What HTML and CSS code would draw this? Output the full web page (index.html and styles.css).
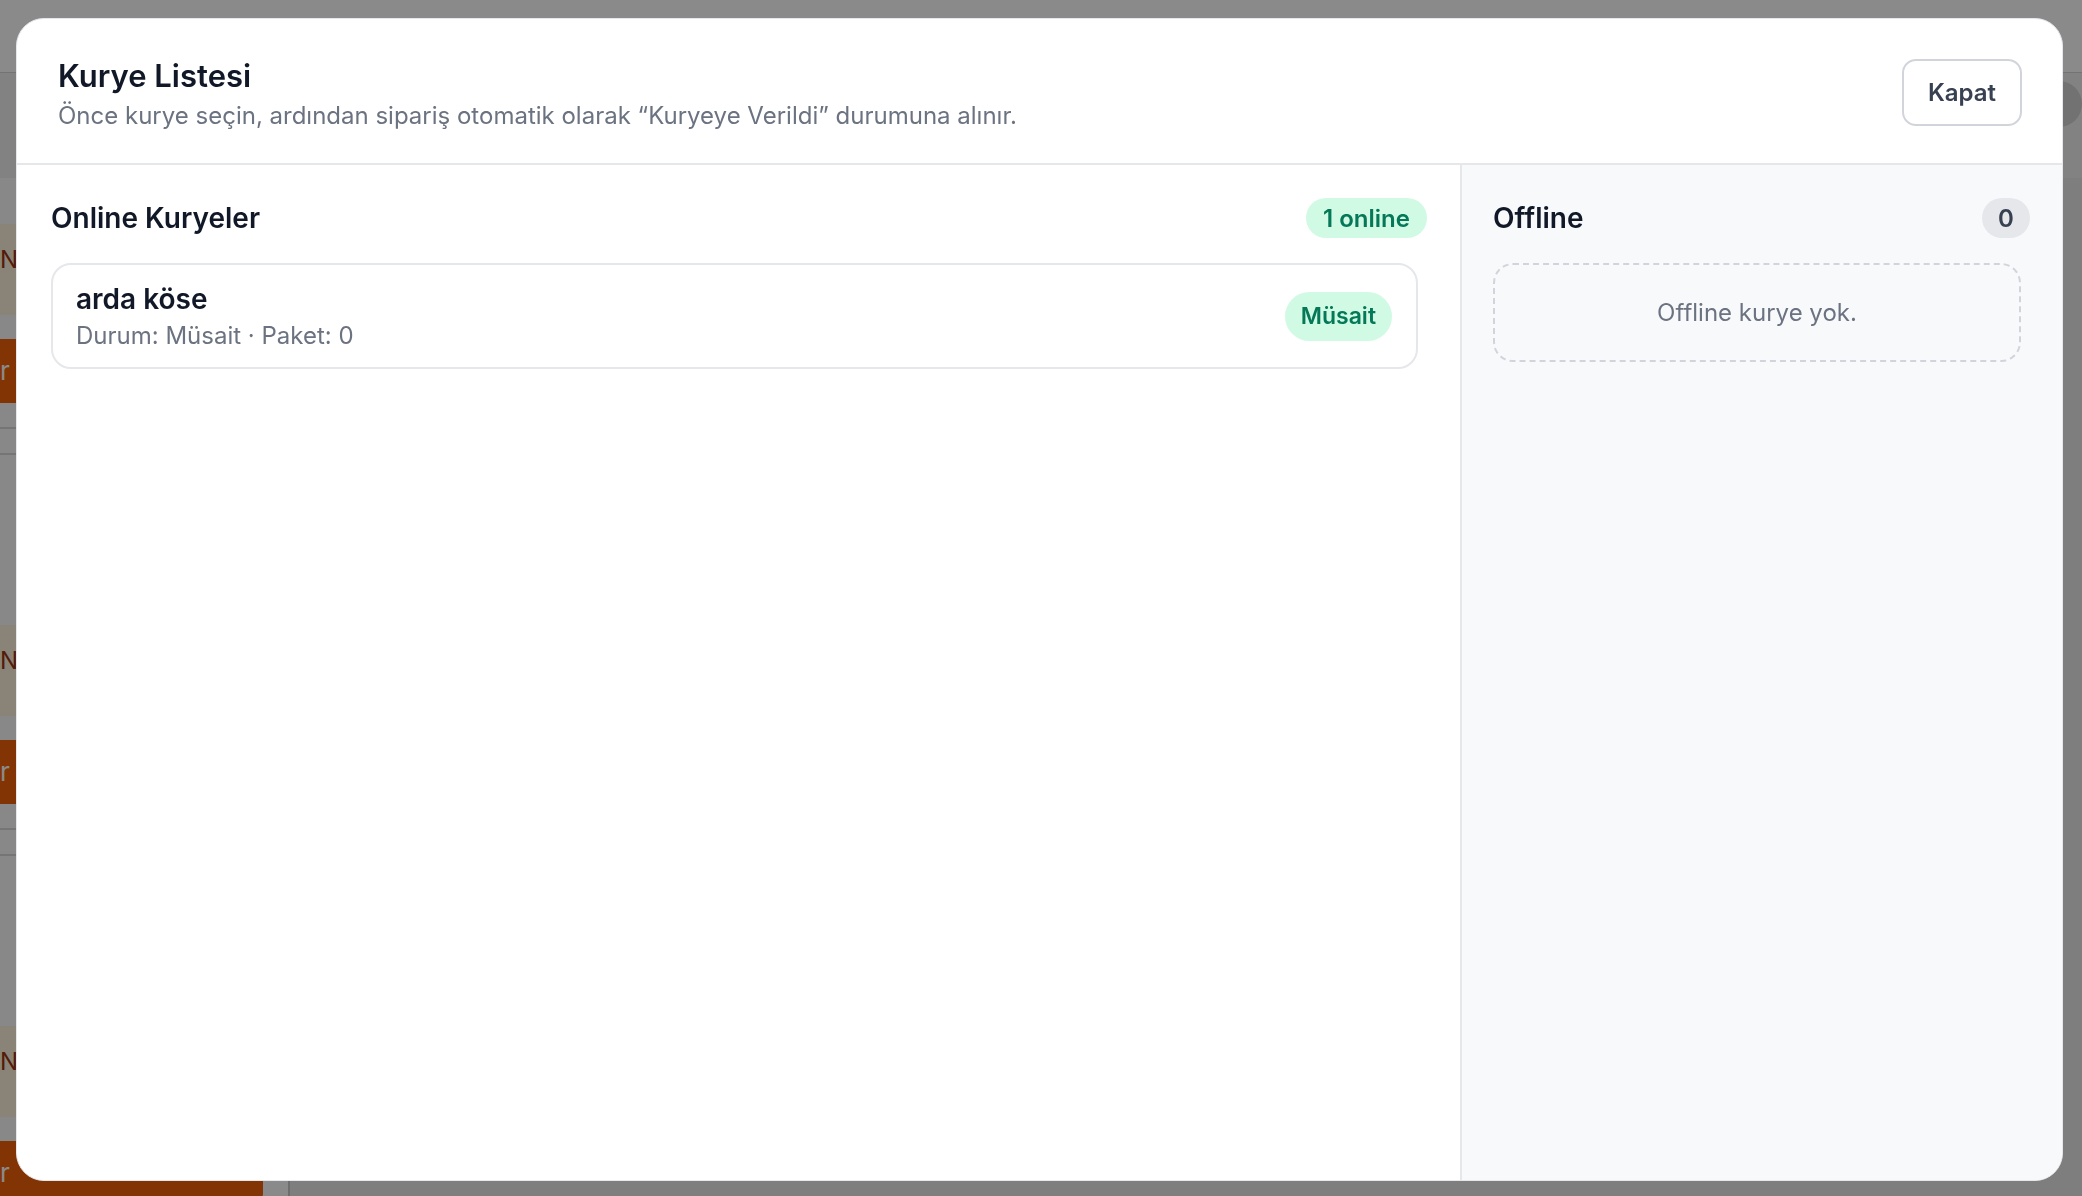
FILE: index.html
```html
<!DOCTYPE html>
<html lang="tr">
<head>
    <meta charset="UTF-8">
    <title>Kurye Listesi</title>
    <link rel="stylesheet" href="styles.css">
</head>
<body>
    <div class="app">
        <header class="app-top"></header>
        <div class="app-toolbar">
            <span class="avatar"></span>
        </div>
        <div class="app-main">
            <div class="orders">
                <div class="order">
                    <div class="order-tag">N</div>
                    <div class="order-btn">r</div>
                    <div class="order-row"></div>
                    <div class="order-row"></div>
                </div>
                <div class="order">
                    <div class="order-tag">N</div>
                    <div class="order-btn">r</div>
                    <div class="order-row"></div>
                    <div class="order-row"></div>
                </div>
                <div class="order">
                    <div class="order-tag">N</div>
                    <div class="order-btn">r</div>
                </div>
            </div>
            <div class="board"></div>
        </div>
    </div>

    <div class="overlay">
        <div class="modal">
            <div class="modal-head">
                <div class="modal-titles">
                    <h2>Kurye Listesi</h2>
                    <p>Önce kurye seçin, ardından sipariş otomatik olarak “Kuryeye Verildi” durumuna alınır.</p>
                </div>
                <button type="button" class="btn-close">Kapat</button>
            </div>

            <div class="modal-body">
                <section class="col col-online">
                    <div class="col-head">
                        <h3>Online Kuryeler</h3>
                        <span class="pill pill-green">1 online</span>
                    </div>
                    <div class="col-list">
                        <div class="courier">
                            <div class="courier-info">
                                <div class="courier-name">arda köse</div>
                                <div class="courier-meta">Durum: Müsait · Paket: 0</div>
                            </div>
                            <span class="pill pill-green pill-lg">Müsait</span>
                        </div>
                    </div>
                </section>

                <section class="col col-offline">
                    <div class="col-head">
                        <h3>Offline</h3>
                        <span class="pill pill-gray">0</span>
                    </div>
                    <div class="col-list">
                        <div class="empty">Offline kurye yok.</div>
                    </div>
                </section>
            </div>
        </div>
    </div>
</body>
</html>
```

FILE: styles.css
```css
* {
    box-sizing: border-box;
}
body {
    margin: 0;
    font-family: Inter, "Noto Sans", Arial, sans-serif;
    background-color: #ffffff;
    color: #111827;
    height: 100vh;
    overflow: hidden;
}

/* page behind the dialog */
.app {
    height: 100vh;
    overflow: hidden;
}
.app-top {
    height: 73px;
    border-bottom: 1px solid #d4d4d4;
    background-color: #ffffff;
}
.app-toolbar {
    height: 105px;
    background-color: #f1f1f1;
    display: flex;
    justify-content: flex-end;
    padding-top: 8px;
}
.avatar {
    width: 46px;
    height: 46px;
    border-radius: 50%;
    background-color: #d2d2d2;
}
.app-main {
    display: flex;
    gap: 25px;
    height: calc(100vh - 178px);
    overflow: hidden;
}
.orders {
    width: 263px;
    background-color: #fbfbfb;
}
.order {
    height: 401px;
    padding-top: 46px;
}
.order-tag {
    height: 91px;
    background-color: #fff3de;
    color: #9a3412;
    font-size: 24px;
    line-height: 72px;
}
.order-btn {
    height: 64px;
    margin-top: 24px;
    background-color: #f0600a;
    color: #ffffff;
    font-size: 26px;
    line-height: 64px;
    border-radius: 0 0 12px 0;
}
.order-row {
    height: 26px;
    border-bottom: 2px solid #d8d8d8;
}
.board {
    flex: 1;
    background-color: #e9e9e9;
    border-left: 2px solid #c9c9c9;
}

/* dialog */
.overlay {
    position: fixed;
    inset: 0;
    background-color: rgba(0, 0, 0, 0.46);
    padding: 18px 19px 15px 16px;
    display: flex;
}
.modal {
    flex: 1;
    display: flex;
    flex-direction: column;
    background-color: #ffffff;
    border: 1px solid #e5e7eb;
    border-radius: 28px;
    overflow: hidden;
}
.modal-head {
    display: flex;
    justify-content: space-between;
    align-items: flex-start;
    padding: 38px 40px 30px 41px;
    border-bottom: 2px solid #e5e7eb;
}
.modal-titles h2 {
    margin: 0;
    font-size: 31px;
    line-height: 38px;
    font-weight: 600;
    color: #111827;
}
.modal-titles p {
    margin: 4px 0 0;
    font-size: 24px;
    line-height: 34px;
    color: #6b7280;
}
.btn-close {
    width: 120px;
    height: 67px;
    margin-top: 2px;
    border: 2px solid #d1d5db;
    border-radius: 14px;
    background-color: #ffffff;
    color: #374151;
    font-family: inherit;
    font-size: 24px;
    font-weight: 600;
}

.modal-body {
    flex: 1;
    display: grid;
    grid-template-columns: 1fr 602px;
}
.col {
    padding: 33px 33px 0 34px;
}
.col-offline {
    background-color: #f8f9fb;
    border-left: 2px solid #e5e7eb;
    padding: 33px 32px 0 31px;
}
.col-head {
    display: flex;
    justify-content: space-between;
    align-items: center;
    height: 40px;
}
.col-head h3 {
    margin: 0;
    font-size: 28px;
    font-weight: 600;
    color: #111827;
}
.col-list {
    margin-top: 25px;
    padding-right: 9px;
}

.pill {
    display: inline-flex;
    align-items: center;
    justify-content: center;
    height: 40px;
    padding: 0 17px;
    border-radius: 999px;
    font-size: 24px;
    font-weight: 600;
}
.pill-green {
    background-color: #d1fae5;
    color: #047857;
}
.pill-gray {
    background-color: #e5e7eb;
    color: #374151;
    min-width: 48px;
    padding: 0 12px;
}
.pill-lg {
    height: 49px;
    padding: 0 16px;
    font-size: 23px;
}

.courier {
    display: flex;
    justify-content: space-between;
    align-items: center;
    height: 106px;
    padding: 0 24px 0 23px;
    border: 2px solid #e5e7eb;
    border-radius: 20px;
    background-color: #ffffff;
}
.courier-name {
    font-size: 28px;
    line-height: 34px;
    font-weight: 600;
    color: #111827;
}
.courier-meta {
    margin-top: 5px;
    font-size: 24px;
    line-height: 30px;
    color: #6b7280;
}

.empty {
    height: 99px;
    display: flex;
    align-items: center;
    justify-content: center;
    border: 2px dashed #d1d5db;
    border-radius: 20px;
    font-size: 24px;
    color: #6b7280;
}
```
